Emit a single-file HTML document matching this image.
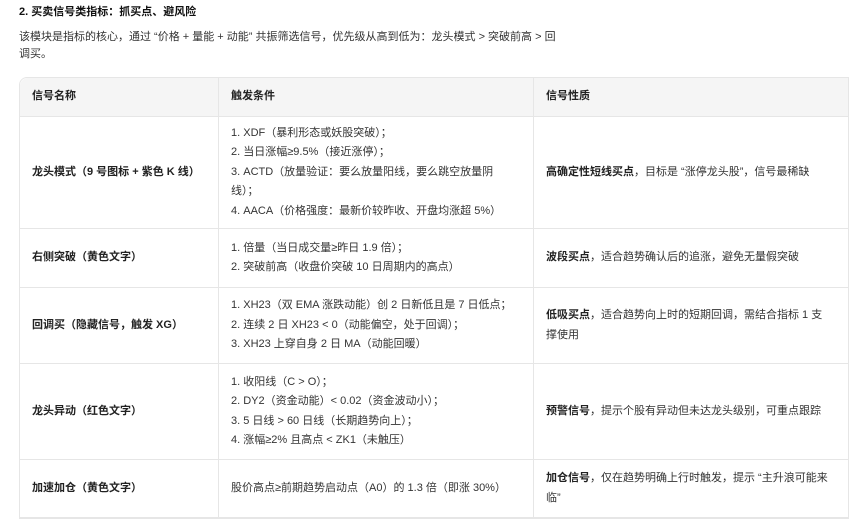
<!DOCTYPE html>
<html><head><meta charset="utf-8"><style>
body{margin:0;background:#fff;font-family:"Liberation Sans","Noto Sans CJK SC",sans-serif;color:#333;font-size:11px;width:850px;height:507px;overflow:hidden;position:relative}
h3{position:absolute;left:19px;top:4px;margin:0;font-size:11px;font-weight:bold;color:#111;line-height:16px}
p{position:absolute;left:19px;top:29px;margin:0;width:600px;line-height:17px;color:#333;white-space:nowrap}
table{position:absolute;left:19px;top:77px;width:830px;table-layout:fixed;border-collapse:separate;border-spacing:0;border:1px solid #e6e6e6;border-radius:8px 0 0 0;}
td,th{border-right:1px solid #e6e6e6;border-bottom:1px solid #e6e6e6;text-align:left;padding:0 12px;vertical-align:middle;line-height:19.5px;white-space:nowrap}
td:last-child{white-space:normal}
th{background:#f5f5f5;height:38px;font-weight:bold;color:#222}
th:first-child{border-radius:8px 0 0 0}
td:first-child{font-weight:bold;color:#222}
td b{color:#222}
td:last-child,th:last-child{border-right:none}
</style></head><body>
<h3>2. 买卖信号类指标：抓买点、避风险</h3>
<p>该模块是指标的核心，通过 “价格 + 量能 + 动能” 共振筛选信号，优先级从高到低为：龙头模式 &gt; 突破前高 &gt; 回<br>调买。</p>
<table>
<colgroup><col style="width:199px"><col style="width:315px"><col></colgroup>
<tr><th>信号名称</th><th>触发条件</th><th>信号性质</th></tr>
<tr style="height:112px"><td>龙头模式（9 号图标 + 紫色 K 线）</td><td>1. XDF（暴利形态或妖股突破）；<br>2. 当日涨幅≥9.5%（接近涨停）；<br>3. ACTD（放量验证：要么放量阳线，要么跳空放量阴<br>线）；<br>4. AACA（价格强度：最新价较昨收、开盘均涨超 5%）</td><td><b>高确定性短线买点</b>，目标是 “涨停龙头股”，信号最稀缺</td></tr>
<tr style="height:59px"><td>右侧突破（黄色文字）</td><td>1. 倍量（当日成交量≥昨日 1.9 倍）；<br>2. 突破前高（收盘价突破 10 日周期内的高点）</td><td><b>波段买点</b>，适合趋势确认后的追涨，避免无量假突破</td></tr>
<tr style="height:76px"><td>回调买（隐藏信号，触发 XG）</td><td>1. XH23（双 EMA 涨跌动能）创 2 日新低且是 7 日低点；<br>2. 连续 2 日 XH23 &lt; 0（动能偏空，处于回调）；<br>3. XH23 上穿自身 2 日 MA（动能回暖）</td><td><b>低吸买点</b>，适合趋势向上时的短期回调，需结合指标 1 支<br>撑使用</td></tr>
<tr style="height:96px"><td>龙头异动（红色文字）</td><td>1. 收阳线（C &gt; O）；<br>2. DY2（资金动能）&lt; 0.02（资金波动小）；<br>3. 5 日线 &gt; 60 日线（长期趋势向上）；<br>4. 涨幅≥2% 且高点 &lt; ZK1（未触压）</td><td><b>预警信号</b>，提示个股有异动但未达龙头级别，可重点跟踪</td></tr>
<tr style="height:58px"><td>加速加仓（黄色文字）</td><td>股价高点≥前期趋势启动点（A0）的 1.3 倍（即涨 30%）</td><td><b>加仓信号</b>，仅在趋势明确上行时触发，提示 “主升浪可能来<br>临”</td></tr>
</table>
</body></html>
